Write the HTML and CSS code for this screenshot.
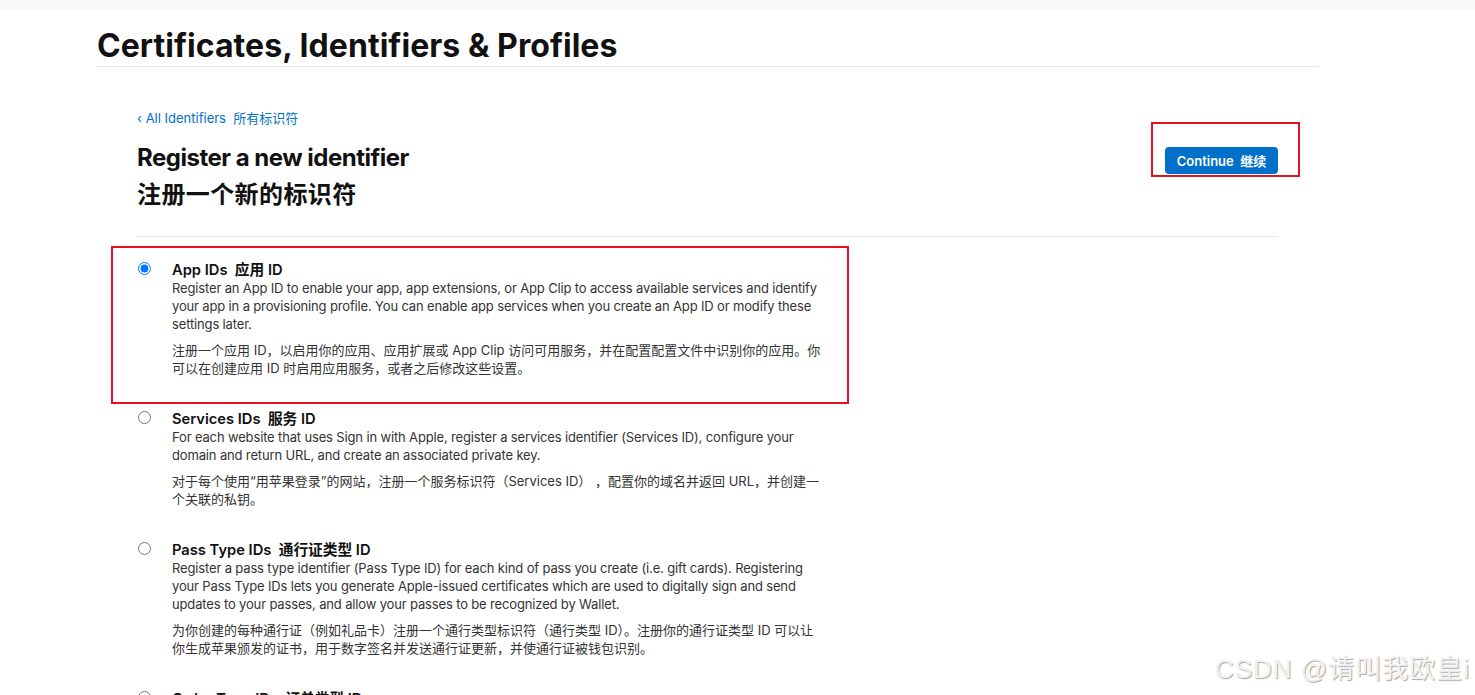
FILE: index.html
```html
<!DOCTYPE html>
<html lang="zh-CN">
<head>
<meta charset="utf-8">
<title>Certificates, Identifiers &amp; Profiles</title>
<link rel="stylesheet" href="styles.css">
</head>
<body>
<div class="topbar"></div>
<div class="page">
  <header class="page-header">
    <h1 class="page-title">Certificates, Identifiers &amp; Profiles</h1>
  </header>
  <main class="content">
    <a class="back-link" href="#">&lsaquo; All Identifiers&nbsp; 所有标识符</a>
    <div class="head-row">
      <h2 class="head-title"><span class="head-en">Register a new identifier</span><span class="head-zh">注册一个新的标识符</span></h2>
      <div class="btn-wrap">
        <button class="btn-primary" type="button">Continue&nbsp; 继续</button>
        <span class="annot annot-btn"></span>
      </div>
    </div>
    <hr class="divider">
    <ul class="id-list">
      <li class="id-item">
        <span class="annot annot-item"></span>
        <input class="radio" type="radio" name="idtype" checked>
        <div class="id-body">
          <div class="id-title">App IDs&nbsp; 应用 ID</div>
          <p class="id-desc">Register an App ID to enable your app, app extensions, or App Clip to access available services and identify your app in a provisioning profile. You can enable app services when you create an App ID or modify these settings later.</p>
          <p class="id-desc zh">注册一个应用 ID，以启用你的应用、应用扩展或 App Clip 访问可用服务，并在配置配置文件中识别你的应用。你可以在创建应用 ID 时启用应用服务，或者之后修改这些设置。</p>
        </div>
      </li>
      <li class="id-item">
        <input class="radio" type="radio" name="idtype">
        <div class="id-body">
          <div class="id-title">Services IDs&nbsp; 服务 ID</div>
          <p class="id-desc">For each website that uses Sign in with Apple, register a services identifier (Services ID), configure your domain and return URL, and create an associated private key.</p>
          <p class="id-desc zh">对于每个使用“用苹果登录”的网站，注册一个服务标识符（Services ID） ，配置你的域名并返回 URL，并创建一个关联的私钥。</p>
        </div>
      </li>
      <li class="id-item">
        <input class="radio" type="radio" name="idtype">
        <div class="id-body">
          <div class="id-title">Pass Type IDs&nbsp; 通行证类型 ID</div>
          <p class="id-desc">Register a pass type identifier (Pass Type ID) for each kind of pass you create (i.e. gift cards). Registering your Pass Type IDs lets you generate Apple-issued certificates which are used to digitally sign and send updates to your passes, and allow your passes to be recognized by Wallet.</p>
          <p class="id-desc zh">为你创建的每种通行证（例如礼品卡）注册一个通行类型标识符（通行类型 ID）。注册你的通行证类型 ID 可以让你生成苹果颁发的证书，用于数字签名并发送通行证更新，并使通行证被钱包识别。</p>
        </div>
      </li>
      <li class="id-item">
        <input class="radio" type="radio" name="idtype">
        <div class="id-body">
          <div class="id-title">Order Type IDs&nbsp; 订单类型 ID</div>
          <p class="id-desc">Register an order type identifier (Order Type ID) for each kind of order you create.</p>
        </div>
      </li>
    </ul>
  </main>
</div>
<div class="watermark">CSDN @请叫我欧皇i</div>
</body>
</html>
```
FILE: styles.css
```css
html, body {
  margin: 0;
  padding: 0;
  background: #fff;
}
body {
  font-family: Inter, "Noto Sans CJK SC", sans-serif;
  color: #1d1d1f;
  overflow: hidden;
  height: 695px;
  position: relative;
}
.topbar {
  height: 9px;
  background: #f9f9f9;
}
.page {
  margin-left: 97px;
  width: 1221px;
}
.page-header {
  margin-top: 17px;
  border-bottom: 1px solid #e3e3e3;
}
.page-title {
  margin: 0;
  font-size: 32px;
  line-height: 40px;
  font-weight: 700;
  letter-spacing: 0.05px;
  color: #111;
}
.content {
  padding: 0 40px;
}
.back-link {
  display: inline-block;
  margin-top: 42px;
  font-size: 13px;
  line-height: 18px;
  color: #0070c9;
  text-decoration: none;
}
.head-row {
  display: flex;
  justify-content: space-between;
  align-items: flex-start;
  margin-top: 12px;
}
.head-title {
  margin: 0;
  display: flex;
  flex-direction: column;
  font-size: 24px;
  line-height: 37px;
  font-weight: 700;
  color: #111;
}
.head-en {
  letter-spacing: -0.5px;
}
.head-zh {
  letter-spacing: 0.4px;
}
.btn-wrap {
  position: relative;
  margin-top: 8px;
}
.btn-primary {
  display: block;
  width: 113px;
  height: 27px;
  border: 0;
  border-radius: 4px;
  background: #0070c9;
  color: #fff;
  font-family: Inter, "Noto Sans CJK SC", sans-serif;
  font-size: 13px;
  font-weight: 600;
  padding: 0;
}
.annot {
  position: absolute;
  border: 2px solid #e3131e;
  pointer-events: none;
}
.annot-btn {
  left: -14px;
  top: -25px;
  width: 145px;
  height: 51px;
}
.divider {
  margin: 23px 0 0;
  border: 0;
  border-top: 1px solid #e3e3e3;
  height: 0;
}
.id-list {
  list-style: none;
  margin: 24px 0 0;
  padding: 0;
}
.id-item {
  position: relative;
  display: flex;
  align-items: flex-start;
  margin-bottom: 33px;
}
.annot-item {
  left: -26px;
  top: -15px;
  width: 734px;
  height: 154px;
}
.radio {
  margin: 1px 0 0 1px;
  width: 13px;
  height: 13px;
  flex: none;
}
.id-body {
  margin-left: 21px;
  width: 650px;
}
.id-title {
  font-size: 14.7px;
  line-height: 18px;
  font-weight: 600;
  color: #111;
}
.id-desc {
  margin: 0;
  font-size: 13px;
  line-height: 18px;
  color: #333;
  letter-spacing: -0.15px;
}
.id-desc.zh {
  margin-top: 8px;
  letter-spacing: 0;
}
.watermark {
  position: absolute;
  right: 5px;
  bottom: 10px;
  font-family: "Liberation Sans", "Noto Sans CJK SC", sans-serif;
  font-size: 26px;
  font-weight: 400;
  color: #f2f2f2;
  text-shadow: 1px 1px 1px #a8a8a8;
  letter-spacing: 1px;
}
```
